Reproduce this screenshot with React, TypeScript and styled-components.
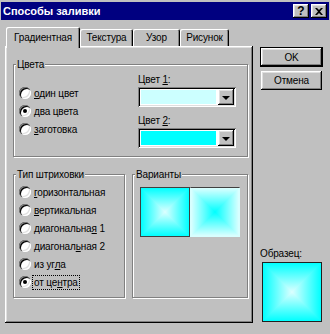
import { ReactNode } from 'react';
import styled, { createGlobalStyle, css } from 'styled-components';

const GlobalStyle = createGlobalStyle`
  html, body {
    margin: 0;
    padding: 0;
    background: #c0c0c0;
  }
  body {
    font-family: "Liberation Sans", Arial, sans-serif;
    font-size: 10px;
    letter-spacing: -0.15px;
    color: #000;
  }
`;

const raised = css`
  box-shadow: inset -1px -1px #000, inset 1px 1px #fff, inset -2px -2px #808080, inset 2px 2px #dfdfdf;
`;

const sunken = css`
  box-shadow: inset 1px 1px #808080, inset -1px -1px #fff, inset 2px 2px #000, inset -2px -2px #dfdfdf;
`;

const Window = styled.div`
  width: 330px;
  height: 334px;
  box-sizing: border-box;
  padding: 2px 1px 0 1px;
  background: #c0c0c0;
  display: flex;
  flex-direction: column;
`;

const TitleBar = styled.div`
  height: 18px;
  background: #000080;
  color: #fff;
  display: flex;
  align-items: center;
  padding: 0 2px 0 2px;
  font-weight: bold;
  font-size: 11px;
  letter-spacing: 0;
`;

const TitleText = styled.span`
  flex: 1;
`;

const TitleButton = styled.div`
  width: 16px;
  height: 14px;
  background: #c0c0c0;
  ${raised};
  display: flex;
  align-items: center;
  justify-content: center;
  font-size: 12px;
  font-weight: bold;
  color: #000;
  & + & {
    margin-left: 2px;
  }
`;

const Body = styled.div`
  flex: 1;
  display: flex;
  gap: 7px;
  padding: 7px 6px 11px 4px;
  min-height: 0;
`;

const LeftColumn = styled.div`
  width: 248px;
  display: flex;
  flex-direction: column;
`;

const TabRow = styled.div`
  height: 19px;
  display: flex;
  align-items: flex-end;
  padding-left: 1px;
  position: relative;
  z-index: 1;
`;

const Tab = styled.div<{ $active?: boolean; $w: number }>`
  width: ${p => p.$w}px;
  height: ${p => (p.$active ? 21 : 17)}px;
  margin-bottom: ${p => (p.$active ? -2 : 0)}px;
  box-sizing: border-box;
  background: #c0c0c0;
  border-top-left-radius: 2px;
  border-top-right-radius: 2px;
  box-shadow: inset 1px 1px #fff, inset -1px 0 #000, inset -2px 0 #808080;
  display: flex;
  align-items: ${p => (p.$active ? 'flex-start' : 'center')};
  padding-top: ${p => (p.$active ? 5 : 0)}px;
  justify-content: center;
`;

const Panel = styled.div`
  flex: 1;
  box-sizing: border-box;
  padding: 18px 5px 0 8px;
  ${raised};
  display: flex;
  flex-direction: column;
  gap: 17px;
`;

const GroupBox = styled.div`
  position: relative;
  border: 1px solid #808080;
  box-shadow: inset 1px 1px #fff, 1px 1px #fff;
`;

const GroupLabel = styled.span`
  position: absolute;
  top: -7px;
  left: 2px;
  padding: 0 1px;
  line-height: 13px;
  background: #c0c0c0;
`;

const ColorsGroup = styled(GroupBox)`
  display: flex;
  padding: 0 11px 0 5px;
`;

const RadioList = styled.div<{ $top: number }>`
  flex: 1;
  display: flex;
  flex-direction: column;
  padding-top: ${p => p.$top}px;
`;

const RadioRow = styled.div`
  height: 18px;
  display: flex;
  align-items: center;
  gap: 2px;
`;

const RadioCircle = styled.span<{ $checked?: boolean }>`
  width: 12px;
  height: 12px;
  flex: none;
  border-radius: 50%;
  background: #fff;
  box-shadow: inset 1px 1px #808080, inset 2px 2px #000, inset -1px -1px #fff, inset -2px -2px #dfdfdf;
  display: flex;
  align-items: center;
  justify-content: center;
  &::after {
    content: '';
    width: 4px;
    height: 4px;
    border-radius: 50%;
    background: ${p => (p.$checked ? '#000' : 'transparent')};
  }
`;

const RadioLabel = styled.span<{ $focused?: boolean }>`
  line-height: 13px;
  padding: 0 1px;
  outline: ${p => (p.$focused ? '1px dotted #000' : 'none')};
`;

const Key = styled.span`
  text-decoration: underline;
`;

const ColorColumn = styled.div`
  width: 98px;
  display: flex;
  flex-direction: column;
  padding: 8px 0 8px;
`;

const FieldLabel = styled.div<{ $gap?: number }>`
  line-height: 13px;
  margin-top: ${p => p.$gap ?? 0}px;
  margin-bottom: 1px;
`;

const Combo = styled.div`
  height: 20px;
  box-sizing: border-box;
  background: #fff;
  ${sunken};
  display: flex;
  padding: 2px;
`;

const Swatch = styled.div<{ $color: string }>`
  flex: 1;
  margin: 1px 2px 1px 1px;
  background: ${p => p.$color};
`;

const DropButton = styled.div`
  width: 16px;
  background: #c0c0c0;
  ${raised};
  display: flex;
  align-items: center;
  justify-content: center;
`;

const Arrow = styled.span`
  width: 0;
  height: 0;
  border-left: 4px solid transparent;
  border-right: 4px solid transparent;
  border-top: 4px solid #000;
  margin-top: 1px;
`;

const BottomRow = styled.div`
  display: grid;
  grid-template-columns: 112px 1fr;
  gap: 7px;
`;

const ShadingGroup = styled(GroupBox)`
  padding: 0 0 6px 5px;
`;

const VariantsGroup = styled(GroupBox)`
  display: flex;
  align-items: flex-start;
  padding: 12px 0 0 7px;
`;

const centerLight = css`
  background: linear-gradient(to right, #00ffff, #dcffff, #00ffff),
    linear-gradient(to bottom, #00ffff, #dcffff, #00ffff);
  background-blend-mode: darken;
`;

const centerDark = css`
  background: linear-gradient(to right, #dcffff, #00ffff, #dcffff),
    linear-gradient(to bottom, #dcffff, #00ffff, #dcffff);
  background-blend-mode: lighten;
`;

const Variant = styled.div<{ $selected?: boolean; $inverse?: boolean }>`
  width: 50px;
  height: 50px;
  box-sizing: border-box;
  ${p => (p.$inverse ? centerDark : centerLight)};
  border: 1px solid ${p => (p.$selected ? '#404040' : 'transparent')};
  border-top-color: #404040;
`;

const RightColumn = styled.div`
  width: 63px;
  display: flex;
  flex-direction: column;
  padding-top: 20px;
`;

const PushButton = styled.div<{ $default?: boolean }>`
  height: ${p => (p.$default ? 20 : 19)}px;
  margin: ${p => (p.$default ? '0' : '4px 1px 0')};
  box-sizing: border-box;
  background: #c0c0c0;
  display: flex;
  align-items: center;
  justify-content: center;
  ${raised};
  ${p =>
    p.$default &&
    css`
      box-shadow: inset 0 0 0 1px #000, inset -2px -2px #000, inset 2px 2px #fff, inset -3px -3px #808080, inset 3px 3px #dfdfdf;
    `}
`;

const SampleLabel = styled.div`
  margin-top: auto;
  line-height: 13px;
  margin-bottom: 2px;
`;

const Sample = styled.div`
  height: 60px;
  box-sizing: border-box;
  margin: 0 1px 1px 2px;
  border: 1px solid #202020;
  ${centerLight};
`;

const CloseIcon = () => (
  <svg width="8" height="7" viewBox="0 0 8 7">
    <path d="M0 0h2l2 2 2-2h2L5 3.5 8 7H6L4 5 2 7H0l3-3.5z" fill="#000" />
  </svg>
);

const Radio = ({ checked, focused, children }: { checked?: boolean; focused?: boolean; children: ReactNode }) => (
  <RadioRow>
    <RadioCircle $checked={checked} />
    <RadioLabel $focused={focused}>{children}</RadioLabel>
  </RadioRow>
);

const ColorCombo = ({ color }: { color: string }) => (
  <Combo>
    <Swatch $color={color} />
    <DropButton>
      <Arrow />
    </DropButton>
  </Combo>
);

const tabs = [
  { name: 'Градиентная', w: 74 },
  { name: 'Текстура', w: 53 },
  { name: 'Узор', w: 47 },
  { name: 'Рисунок', w: 49 },
];

export default function App() {
  return (
    <>
      <GlobalStyle />
      <Window>
        <TitleBar>
          <TitleText>Способы заливки</TitleText>
          <TitleButton>?</TitleButton>
          <TitleButton>
            <CloseIcon />
          </TitleButton>
        </TitleBar>
        <Body>
          <LeftColumn>
            <TabRow>
              {tabs.map((t, i) => (
                <Tab key={t.name} $w={t.w} $active={i === 0}>
                  {t.name}
                </Tab>
              ))}
            </TabRow>
            <Panel>
              <ColorsGroup>
                <GroupLabel>Цвета</GroupLabel>
                <RadioList $top={19}>
                  <Radio><Key>о</Key>дин цвет</Radio>
                  <Radio checked><Key>д</Key>ва цвета</Radio>
                  <Radio><Key>з</Key>аготовка</Radio>
                </RadioList>
                <ColorColumn>
                  <FieldLabel>Цвет <Key>1</Key>:</FieldLabel>
                  <ColorCombo color="#ccffff" />
                  <FieldLabel $gap={7}>Цвет <Key>2</Key>:</FieldLabel>
                  <ColorCombo color="#00ffff" />
                </ColorColumn>
              </ColorsGroup>
              <BottomRow>
                <ShadingGroup>
                  <GroupLabel>Тип штриховки</GroupLabel>
                  <RadioList $top={8}>
                    <Radio><Key>г</Key>оризонтальная</Radio>
                    <Radio><Key>в</Key>ертикальная</Radio>
                    <Radio>диагональна<Key>я</Key> 1</Radio>
                    <Radio>диагонал<Key>ь</Key>ная 2</Radio>
                    <Radio>из уг<Key>л</Key>а</Radio>
                    <Radio checked focused>от це<Key>н</Key>тра</Radio>
                  </RadioList>
                </ShadingGroup>
                <VariantsGroup>
                  <GroupLabel>Варианты</GroupLabel>
                  <Variant $selected />
                  <Variant $inverse />
                </VariantsGroup>
              </BottomRow>
            </Panel>
          </LeftColumn>
          <RightColumn>
            <PushButton $default>OK</PushButton>
            <PushButton>Отмена</PushButton>
            <SampleLabel>Образец:</SampleLabel>
            <Sample />
          </RightColumn>
        </Body>
      </Window>
    </>
  );
}
